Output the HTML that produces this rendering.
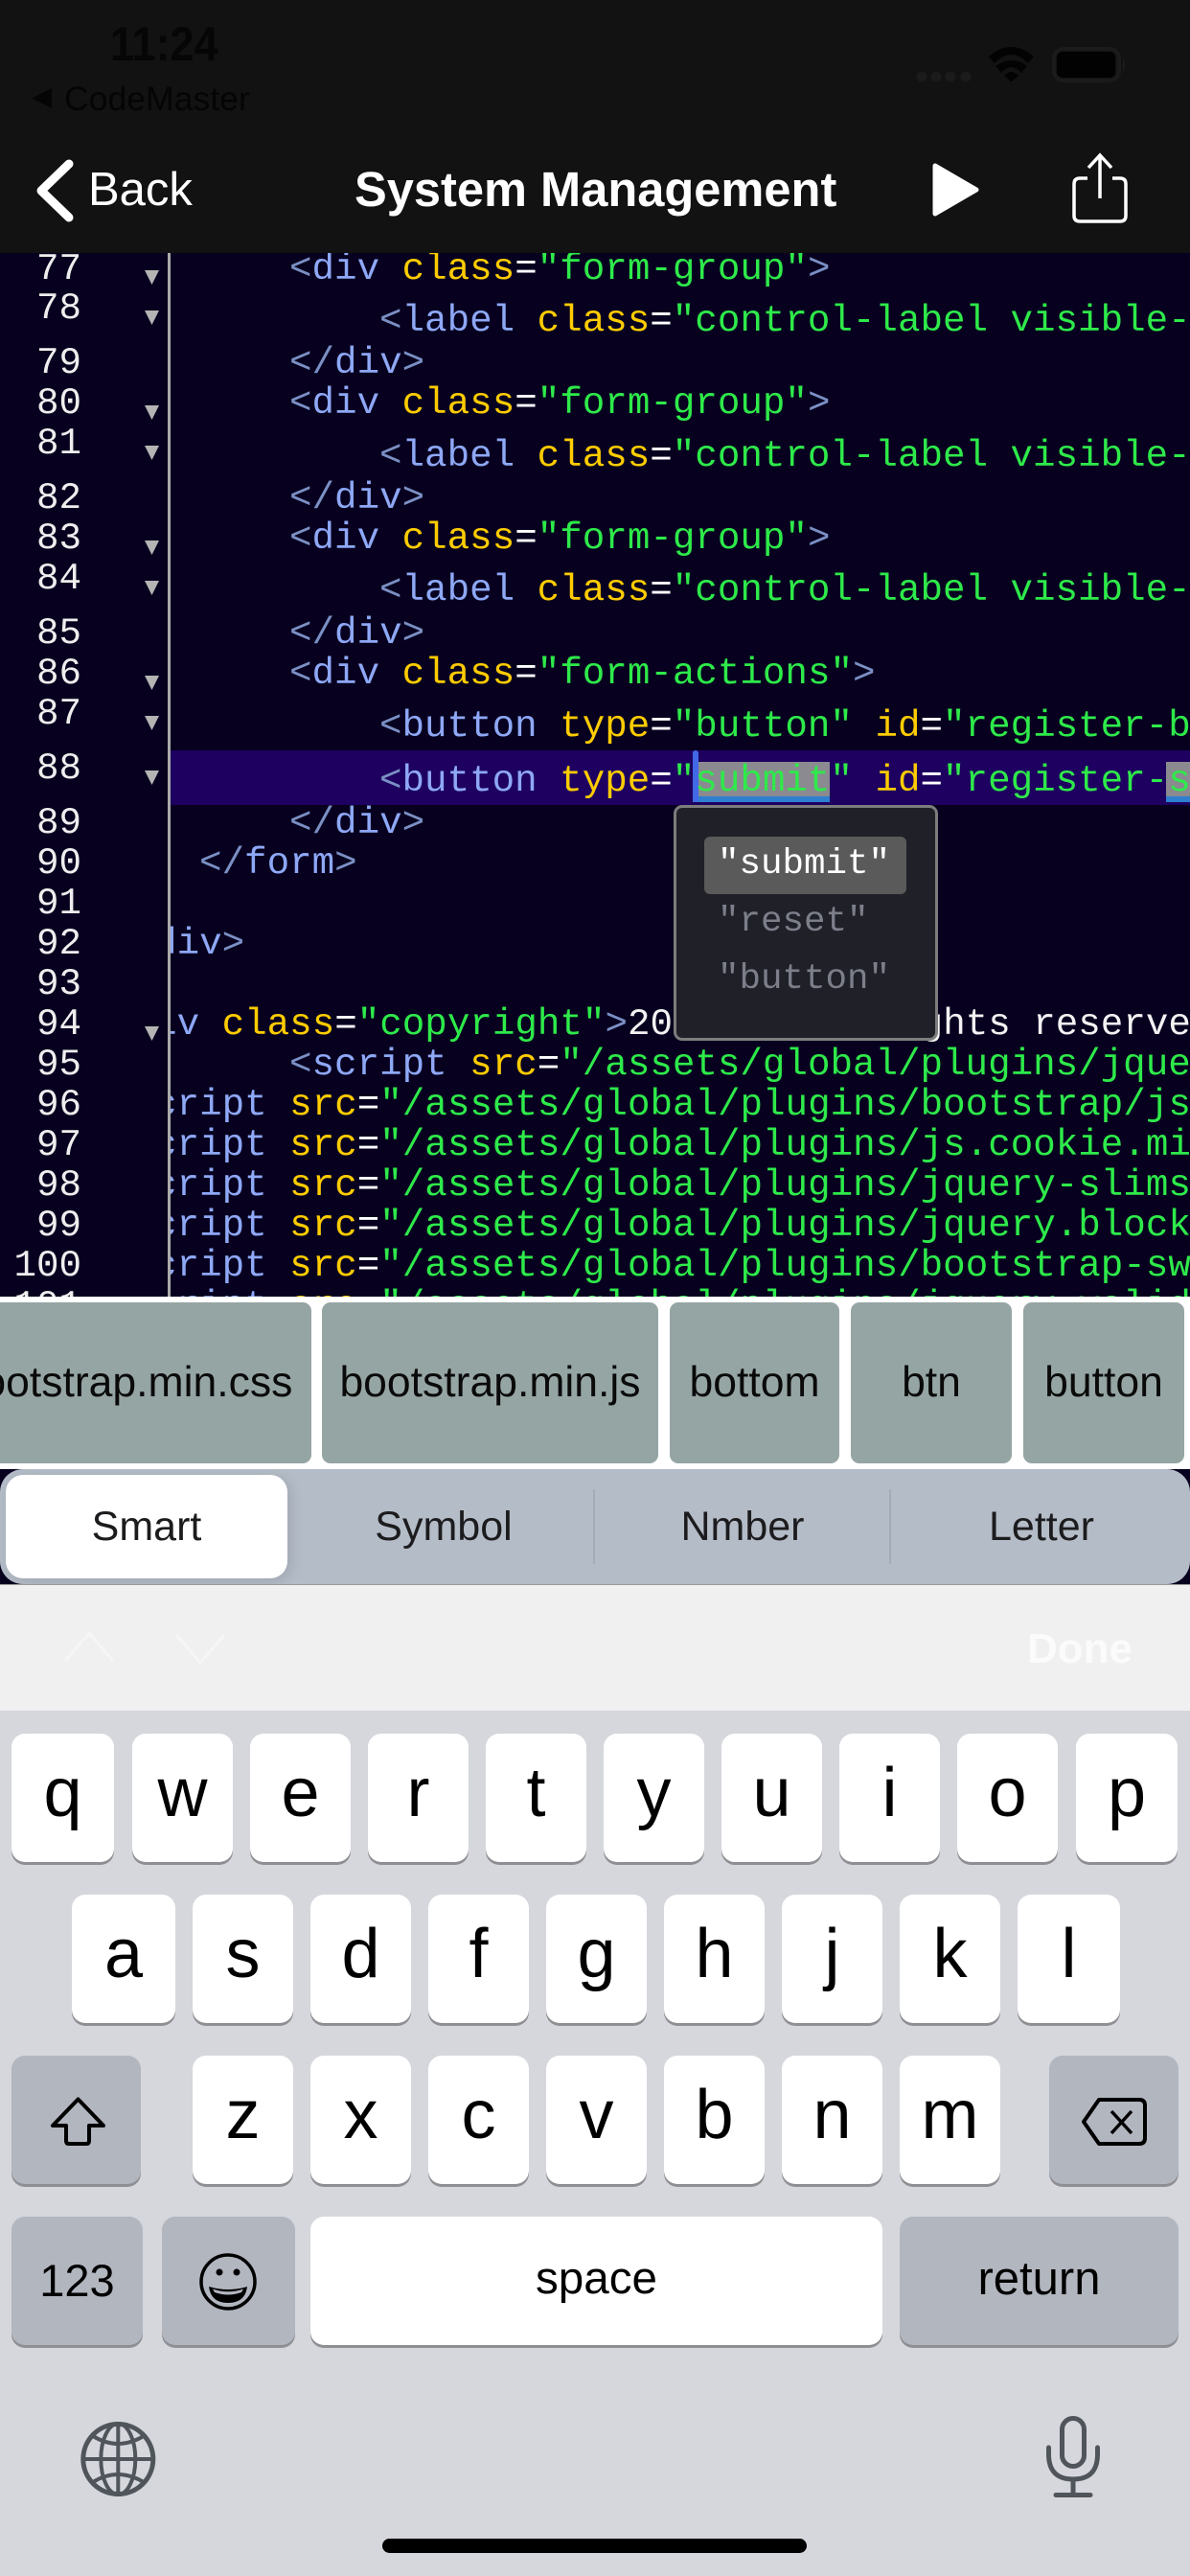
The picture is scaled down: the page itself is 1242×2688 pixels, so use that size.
<!DOCTYPE html>
<html><head><meta charset="utf-8"><style>
html,body{margin:0;padding:0;background:#07001f}
#p{position:relative;width:1242px;height:2688px;overflow:hidden;background:#07001f;font-family:"Liberation Sans",sans-serif}
.abs{position:absolute}
.m{font-family:"Liberation Mono",monospace;font-size:39.2px;line-height:42px;white-space:pre;position:absolute}
.num{color:#eee;width:85px;left:0;text-align:right}
.t{color:#7b90c4}.n{color:#8ea8f6}.a{color:#ffcc00}.e{color:#fff}.s{color:#2eea4a}.w{color:#f2f2f2}
.b{position:absolute;top:1359px;height:168px;background:#95a5a3;border-radius:9px;display:flex;align-items:center;justify-content:center;font-size:44.500px;color:#0a0a0a;white-space:nowrap}
.seg{position:absolute;top:1533px;height:120px;line-height:120px;font-size:43px;color:#1c1c1e;text-align:center}
.k{position:absolute;background:#fff;border-radius:14px;box-shadow:0 3px 0 #8e8e93;text-align:center;color:#000;font-size:72px;line-height:124px;height:134px;width:105px}
.g{background:#b2b6bf}
</style></head><body><div id="p">

<div class="abs" style="left:0;top:0;width:1242px;height:264px;background:#121212"></div>
<div class="abs" style="left:115px;top:18px;font-size:50px;line-height:56px;font-weight:bold;color:#060606;transform:scaleX(.9);transform-origin:left top">11:24</div>
<div class="abs" style="left:67px;top:82px;font-size:35.6px;line-height:42px;color:#050505">CodeMaster</div>
<div class="abs" style="left:92px;top:168px;font-size:49px;line-height:60px;color:#fff">Back</div>
<div class="abs" style="left:370px;top:168px;font-size:50.6px;line-height:60px;font-weight:bold;color:#fff;white-space:nowrap">System Management</div>

<!-- code -->
<div class="abs" style="left:0;top:264px;width:175px;height:1089px;overflow:hidden"><div class="abs" style="left:0;top:-263px;width:175px;height:1400px">
<div class="m num" style="top:259px">77</div><div class="m num" style="top:300px">78</div><div class="m num" style="top:357px">79</div><div class="m num" style="top:399px">80</div><div class="m num" style="top:441px">81</div><div class="m num" style="top:498px">82</div><div class="m num" style="top:540px">83</div><div class="m num" style="top:582px">84</div><div class="m num" style="top:639px">85</div><div class="m num" style="top:681px">86</div><div class="m num" style="top:723px">87</div><div class="m num" style="top:780px">88</div><div class="m num" style="top:837px">89</div><div class="m num" style="top:879px">90</div><div class="m num" style="top:921px">91</div><div class="m num" style="top:963px">92</div><div class="m num" style="top:1005px">93</div><div class="m num" style="top:1047px">94</div><div class="m num" style="top:1089px">95</div><div class="m num" style="top:1131px">96</div><div class="m num" style="top:1173px">97</div><div class="m num" style="top:1215px">98</div><div class="m num" style="top:1257px">99</div><div class="m num" style="top:1299px">100</div><div class="m num" style="top:1341px">101</div>
</div></div>
<div class="abs" style="left:175px;top:264px;width:3px;height:1089px;background:#aaa"></div>

<div class="abs" style="left:178px;top:264px;width:1064px;height:1089px;overflow:hidden"><div class="abs" style="left:-178px;top:-263px;width:1242px;height:1400px">
<div class="abs" style="left:0;top:782px;width:1242px;height:57px;background:#1d0060"></div>
<div class="abs" style="left:723px;top:794px;width:143px;height:42px;background:#8a8a90"></div>
<div class="abs" style="left:723px;top:830px;width:143px;height:6px;background:#2f7fd0"></div>
<div class="abs" style="left:1217px;top:794px;width:25px;height:42px;background:#8a8a90"></div>
<div class="abs" style="left:1217px;top:830px;width:25px;height:6px;background:#2f7fd0"></div>
<div class="abs" style="left:723px;top:782px;width:6px;height:54px;background:#4169e8;border-radius:3px"></div>

<div class="m" style="left:302px;top:259px"><span class="t">&lt;</span><span class="n">div</span> <span class="a">class</span><span class="e">=</span><span class="s">"form-group"</span><span class="t">&gt;</span></div>
<div class="m" style="left:396px;top:313px"><span class="t">&lt;</span><span class="n">label</span> <span class="a">class</span><span class="e">=</span><span class="s">"control-label visible-ie8 visible-ie9"</span></div>
<div class="m" style="left:302px;top:357px"><span class="t">&lt;/</span><span class="n">div</span><span class="t">&gt;</span></div>
<div class="m" style="left:302px;top:399px"><span class="t">&lt;</span><span class="n">div</span> <span class="a">class</span><span class="e">=</span><span class="s">"form-group"</span><span class="t">&gt;</span></div>
<div class="m" style="left:396px;top:454px"><span class="t">&lt;</span><span class="n">label</span> <span class="a">class</span><span class="e">=</span><span class="s">"control-label visible-ie8 visible-ie9"</span></div>
<div class="m" style="left:302px;top:498px"><span class="t">&lt;/</span><span class="n">div</span><span class="t">&gt;</span></div>
<div class="m" style="left:302px;top:540px"><span class="t">&lt;</span><span class="n">div</span> <span class="a">class</span><span class="e">=</span><span class="s">"form-group"</span><span class="t">&gt;</span></div>
<div class="m" style="left:396px;top:594px"><span class="t">&lt;</span><span class="n">label</span> <span class="a">class</span><span class="e">=</span><span class="s">"control-label visible-ie8 visible-ie9"</span></div>
<div class="m" style="left:302px;top:639px"><span class="t">&lt;/</span><span class="n">div</span><span class="t">&gt;</span></div>
<div class="m" style="left:302px;top:681px"><span class="t">&lt;</span><span class="n">div</span> <span class="a">class</span><span class="e">=</span><span class="s">"form-actions"</span><span class="t">&gt;</span></div>
<div class="m" style="left:396px;top:736px"><span class="t">&lt;</span><span class="n">button</span> <span class="a">type</span><span class="e">=</span><span class="s">"button"</span> <span class="a">id</span><span class="e">=</span><span class="s">"register-back-btn"</span></div>
<div class="m" style="left:396px;top:793px"><span class="t">&lt;</span><span class="n">button</span> <span class="a">type</span><span class="e">=</span><span class="s">"submit"</span> <span class="a">id</span><span class="e">=</span><span class="s">"register-submit-btn"</span></div>
<div class="m" style="left:302px;top:837px"><span class="t">&lt;/</span><span class="n">div</span><span class="t">&gt;</span></div>
<div class="m" style="left:208px;top:879px"><span class="t">&lt;/</span><span class="n">form</span><span class="t">&gt;</span></div>
<div class="m" style="left:114px;top:963px"><span class="t">&lt;/</span><span class="n">div</span><span class="t">&gt;</span></div>
<div class="m" style="left:114px;top:1047px"><span class="t">&lt;</span><span class="n">div</span> <span class="a">class</span><span class="e">=</span><span class="s">"copyright"</span><span class="t">&gt;</span><span class="w">2019 © All rights reserved</span></div>
<div class="m" style="left:302px;top:1089px"><span class="t">&lt;</span><span class="n">script</span> <span class="a">src</span><span class="e">=</span><span class="s">"/assets/global/plugins/jquery.min.js"</span></div>
<div class="m" style="left:114px;top:1131px"><span class="t">&lt;</span><span class="n">script</span> <span class="a">src</span><span class="e">=</span><span class="s">"/assets/global/plugins/bootstrap/js/bootstrap.min.js"</span></div>
<div class="m" style="left:114px;top:1173px"><span class="t">&lt;</span><span class="n">script</span> <span class="a">src</span><span class="e">=</span><span class="s">"/assets/global/plugins/js.cookie.min.js"</span></div>
<div class="m" style="left:114px;top:1215px"><span class="t">&lt;</span><span class="n">script</span> <span class="a">src</span><span class="e">=</span><span class="s">"/assets/global/plugins/jquery-slimscroll.js"</span></div>
<div class="m" style="left:114px;top:1257px"><span class="t">&lt;</span><span class="n">script</span> <span class="a">src</span><span class="e">=</span><span class="s">"/assets/global/plugins/jquery.blockui.js"</span></div>
<div class="m" style="left:114px;top:1299px"><span class="t">&lt;</span><span class="n">script</span> <span class="a">src</span><span class="e">=</span><span class="s">"/assets/global/plugins/bootstrap-switch.js"</span></div>
<div class="m" style="left:114px;top:1341px"><span class="t">&lt;</span><span class="n">script</span> <span class="a">src</span><span class="e">=</span><span class="s">"/assets/global/plugins/jquery-validation.js"</span></div>
</div></div>

<!-- popup -->
<div class="abs" style="left:703px;top:840px;width:270px;height:240px;background:#1f2028;border:3px solid #7d7d7d;border-radius:9px"></div>
<div class="abs" style="left:735px;top:873px;width:211px;height:60px;background:#5a5a5a;border-radius:6px"></div>
<div class="m" style="left:749px;top:881px;color:#fff;font-size:37.500px">"submit"</div>
<div class="m" style="left:749px;top:941px;color:#7c7f8a;font-size:37.500px">"reset"</div>
<div class="m" style="left:749px;top:1001px;color:#7c7f8a;font-size:37.500px">"button"</div>

<!-- suggestions -->
<div class="abs" style="left:0;top:1353px;width:1242px;height:180px;background:#fff"></div>
<div class="b" style="left:-63px;width:388px">bootstrap.min.css</div>
<div class="b" style="left:336px;width:351px">bootstrap.min.js</div>
<div class="b" style="left:699px;width:177px">bottom</div>
<div class="b" style="left:888px;width:168px">btn</div>
<div class="b" style="left:1068px;width:168px">button</div>

<!-- segments -->
<div class="abs" style="left:0;top:1533px;width:1242px;height:120px;background:#b4bcc7;border-radius:24px"></div>
<div class="abs" style="left:6px;top:1539px;width:294px;height:108px;background:#fff;border-radius:18px;box-shadow:3px 3px 14px rgba(0,0,0,.12)"></div>
<div class="abs" style="left:619px;top:1554px;width:2px;height:78px;background:#a3abb7"></div>
<div class="abs" style="left:928px;top:1554px;width:2px;height:78px;background:#a3abb7"></div>
<div class="seg" style="left:53px;width:200px">Smart</div>
<div class="seg" style="left:363px;width:200px">Symbol</div>
<div class="seg" style="left:675px;width:200px">Nmber</div>
<div class="seg" style="left:987px;width:200px">Letter</div>

<!-- toolbar + keyboard -->
<div class="abs" style="left:0;top:1653px;width:1242px;height:132px;background:#f0f0f0;border-top:1px solid #999;box-sizing:border-box"></div>
<div class="abs" style="left:1072px;top:1694px;font-size:44px;line-height:54px;font-weight:bold;color:#fbfbfb">Done</div>
<div class="abs" style="left:0;top:1785px;width:1242px;height:903px;background:#d5d7dc"></div>

<div class="k" style="left:12px;top:1809px;width:107px">q</div>
<div class="k" style="left:138px;top:1809px">w</div>
<div class="k" style="left:261px;top:1809px">e</div>
<div class="k" style="left:384px;top:1809px">r</div>
<div class="k" style="left:507px;top:1809px">t</div>
<div class="k" style="left:630px;top:1809px">y</div>
<div class="k" style="left:753px;top:1809px">u</div>
<div class="k" style="left:876px;top:1809px">i</div>
<div class="k" style="left:999px;top:1809px">o</div>
<div class="k" style="left:1123px;top:1809px;width:106px">p</div>

<div class="k" style="left:75px;top:1977px;width:108px">a</div>
<div class="k" style="left:201px;top:1977px">s</div>
<div class="k" style="left:324px;top:1977px">d</div>
<div class="k" style="left:447px;top:1977px">f</div>
<div class="k" style="left:570px;top:1977px">g</div>
<div class="k" style="left:693px;top:1977px">h</div>
<div class="k" style="left:816px;top:1977px">j</div>
<div class="k" style="left:939px;top:1977px">k</div>
<div class="k" style="left:1062px;top:1977px;width:107px">l</div>

<div class="k g" style="left:12px;top:2145px;width:135px"></div>
<div class="k" style="left:201px;top:2145px">z</div>
<div class="k" style="left:324px;top:2145px">x</div>
<div class="k" style="left:447px;top:2145px">c</div>
<div class="k" style="left:570px;top:2145px">v</div>
<div class="k" style="left:693px;top:2145px">b</div>
<div class="k" style="left:816px;top:2145px">n</div>
<div class="k" style="left:939px;top:2145px">m</div>
<div class="k g" style="left:1095px;top:2145px;width:135px"></div>

<div class="k g" style="left:12px;top:2313px;width:137px;font-size:47px;line-height:134px">123</div>
<div class="k g" style="left:169px;top:2313px;width:139px"></div>
<div class="k" style="left:324px;top:2313px;width:597px;font-size:47.6px;line-height:130px">space</div>
<div class="k g" style="left:939px;top:2313px;width:291px;font-size:49px;line-height:130px">return</div>

<div class="abs" style="left:399px;top:2649px;width:443px;height:15px;background:#000;border-radius:8px"></div>

<!-- icons -->
<svg class="abs" style="left:0;top:0" width="1242" height="2688" viewBox="0 0 1242 2688" fill="none">
<!-- status -->
<polygon points="54,92 54,113 33,102.5" fill="#050505"/>
<g fill="#1b1b1b"><circle cx="962" cy="80" r="5.5"/><circle cx="977" cy="80" r="5.5"/><circle cx="992" cy="80" r="5.5"/><circle cx="1008" cy="80" r="5.5"/></g>
<path d="M1032 59 Q1055.500 39 1079 59 L1073 66 Q1055.500 48 1038 66Z M1039 69 Q1055.500 57 1072 69 L1066 76 Q1055.500 64 1045 76Z M1048 79 Q1055.500 71 1063 79 L1055.500 85.500Z" fill="#030303"/>
<rect x="1100" y="51" width="68" height="33" rx="10" stroke="#1b1b1b" stroke-width="4"/>
<rect x="1103" y="54" width="61" height="27" rx="6" fill="#020202"/>
<path d="M1172 60 Q1177 67 1172 75Z" fill="#1b1b1b"/>
<!-- nav -->
<path d="M72 171 L43 199 L72 227" stroke="#fff" stroke-width="9" stroke-linecap="round" stroke-linejoin="round"/>
<path d="M976 173 L1019 198 L976 223 Z" fill="#fff" stroke="#fff" stroke-width="5" stroke-linejoin="round"/>
<path d="M1135 186 H1127 Q1121 186 1121 192 V225 Q1121 231 1127 231 H1169 Q1175 231 1175 225 V192 Q1175 186 1169 186 H1161" stroke="#fff" stroke-width="3.5"/>
<path d="M1148 207 V163 M1136 175 L1148 162 L1160 175" stroke="#fff" stroke-width="3.5"/>
<!-- fold triangles -->
<g fill="#b4b4b4">
<polygon points="151,282 166,282 158.500,297"/><polygon points="151,324 166,324 158.500,339"/>
<polygon points="151,423 166,423 158.500,438"/><polygon points="151,465 166,465 158.500,480"/>
<polygon points="151,564 166,564 158.500,579"/><polygon points="151,606 166,606 158.500,621"/>
<polygon points="151,705 166,705 158.500,720"/><polygon points="151,747 166,747 158.500,762"/>
<polygon points="151,804 166,804 158.500,819"/><polygon points="151,1071 166,1071 158.500,1086"/>
</g>
<!-- toolbar chevrons -->
<path d="M68 1733 L93 1704 L118 1733 M184 1706 L209 1735 L234 1706" stroke="#f6f6f6" stroke-width="3"/>
<!-- shift -->
<path d="M81.500 2190.500 L55 2218 H69 V2234 Q69 2237 72 2237 H90 Q93 2237 93 2234 V2218 H108 Z" stroke="#000" stroke-width="4" stroke-linejoin="round"/>
<!-- delete -->
<path d="M1147 2191 H1189 Q1195 2191 1195 2197 V2231 Q1195 2237 1189 2237 H1147 L1131 2214 Z" stroke="#000" stroke-width="4" stroke-linejoin="round"/>
<path d="M1160 2203 L1181 2226 M1181 2203 L1160 2226" stroke="#000" stroke-width="3.5"/>
<!-- emoji -->
<circle cx="238" cy="2381" r="28" stroke="#000" stroke-width="3.5"/>
<circle cx="229" cy="2371" r="3.5" fill="#000"/><circle cx="247" cy="2371" r="3.5" fill="#000"/>
<path d="M218 2386 Q238 2392 258 2386 Q256 2403 238 2403 Q220 2403 218 2386Z" fill="#000"/>
<path d="M222 2388.500 Q238 2394 254 2388.500 L252 2392 Q238 2397 224 2392Z" fill="#b2b6bf"/>
<!-- globe -->
<g stroke="#50555c">
<circle cx="123.300" cy="2566" r="36.500" stroke-width="5"/>
<ellipse cx="123.300" cy="2566" rx="18" ry="37" stroke-width="4"/>
<path d="M123.300 2529 V2603 M88 2566 H159" stroke-width="4"/>
<path d="M97 2542 Q123 2558 150 2542 M97 2590 Q123 2574 150 2590" stroke-width="4"/>
</g>
<!-- mic -->
<g stroke="#50555c" stroke-width="5" stroke-linecap="round">
<rect x="1108.500" y="2523.500" width="23" height="50" rx="11.500"/>
<path d="M1094.500 2554 V2561 Q1094.500 2587 1120 2587 Q1145.500 2587 1145.500 2561 V2554"/>
<path d="M1120 2587 V2603"/>
<path d="M1102 2603.500 H1138"/>
</g>
</svg>
</div></body></html>
